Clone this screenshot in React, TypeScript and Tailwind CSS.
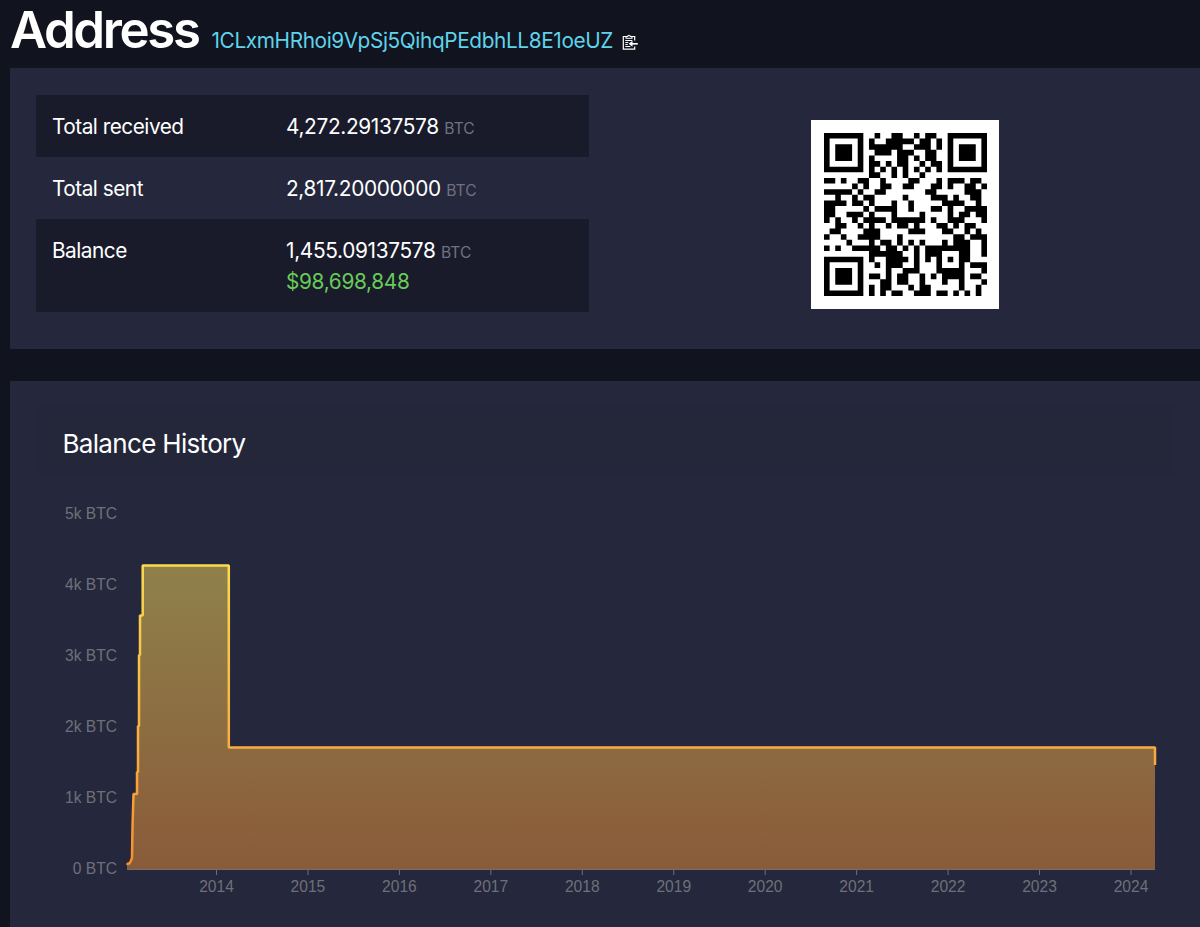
import { useMemo } from 'react'

const ADDRESS = '1CLxmHRhoi9VpSj5QihqPEdbhLL8E1oeUZ'

const QR_SIZE = 29
const DATA_CODEWORDS = 55
const EC_CODEWORDS = 15

// version 3, level L, mask 7
const FORMAT_BITS = 0b110100101110110

function gfMul(a: number, b: number) {
  let r = 0
  for (let i = 7; i >= 0; i--) {
    r = (r << 1) ^ ((r >> 7) * 0x11d)
    r ^= ((b >> i) & 1) * a
  }
  return r & 0xff
}

function errorCorrection(data: number[]) {
  const gen = new Array(EC_CODEWORDS).fill(0)
  gen[EC_CODEWORDS - 1] = 1
  let root = 1
  for (let i = 0; i < EC_CODEWORDS; i++) {
    for (let j = 0; j < EC_CODEWORDS; j++) {
      gen[j] = gfMul(gen[j], root)
      if (j + 1 < EC_CODEWORDS) gen[j] ^= gen[j + 1]
    }
    root = gfMul(root, 2)
  }
  const rem = new Array(EC_CODEWORDS).fill(0)
  for (const byte of data) {
    const factor = byte ^ rem.shift()
    rem.push(0)
    gen.forEach((g, i) => (rem[i] ^= gfMul(g, factor)))
  }
  return rem
}

function buildQr(text: string) {
  let bits = '0100' + text.length.toString(2).padStart(8, '0')
  for (const ch of text) bits += ch.charCodeAt(0).toString(2).padStart(8, '0')
  bits += '0000'
  const data: number[] = []
  for (let i = 0; i < bits.length; i += 8) data.push(parseInt(bits.slice(i, i + 8), 2))
  for (let pad = 0xec; data.length < DATA_CODEWORDS; pad ^= 0xec ^ 0x11) data.push(pad)
  const all = [...data, ...errorCorrection(data)]

  const grid: (boolean | null)[][] = Array.from({ length: QR_SIZE }, () => new Array(QR_SIZE).fill(null))
  const set = (row: number, col: number, dark: boolean) => {
    if (row >= 0 && row < QR_SIZE && col >= 0 && col < QR_SIZE) grid[row][col] = dark
  }

  for (let i = 0; i < QR_SIZE; i++) {
    set(6, i, i % 2 === 0)
    set(i, 6, i % 2 === 0)
  }
  for (const [r, c] of [[3, 3], [3, QR_SIZE - 4], [QR_SIZE - 4, 3]]) {
    for (let dy = -4; dy <= 4; dy++) {
      for (let dx = -4; dx <= 4; dx++) {
        const d = Math.max(Math.abs(dx), Math.abs(dy))
        set(r + dy, c + dx, d !== 2 && d !== 4)
      }
    }
  }
  for (let dy = -2; dy <= 2; dy++) {
    for (let dx = -2; dx <= 2; dx++) {
      set(22 + dy, 22 + dx, Math.max(Math.abs(dx), Math.abs(dy)) !== 1)
    }
  }

  const fmt = (i: number) => ((FORMAT_BITS >> i) & 1) === 1
  for (let i = 0; i <= 5; i++) set(i, 8, fmt(i))
  set(7, 8, fmt(6))
  set(8, 8, fmt(7))
  set(8, 7, fmt(8))
  for (let i = 9; i < 15; i++) set(8, 14 - i, fmt(i))
  for (let i = 0; i < 8; i++) set(8, QR_SIZE - 1 - i, fmt(i))
  for (let i = 8; i < 15; i++) set(QR_SIZE - 15 + i, 8, fmt(i))
  set(QR_SIZE - 8, 8, true)

  let n = 0
  for (let right = QR_SIZE - 1; right >= 1; right -= 2) {
    if (right === 6) right = 5
    for (let v = 0; v < QR_SIZE; v++) {
      for (let j = 0; j < 2; j++) {
        const x = right - j
        const y = ((right + 1) & 2) === 0 ? QR_SIZE - 1 - v : v
        if (grid[y][x] !== null) continue
        const bit = n < all.length * 8 ? (all[n >> 3] >> (7 - (n & 7))) & 1 : 0
        const flip = (((x + y) % 2) + ((x * y) % 3)) % 2 === 0
        grid[y][x] = (bit === 1) !== flip
        n++
      }
    }
  }
  return grid
}

function QrCode({ text }: { text: string }) {
  const path = useMemo(
    () =>
      buildQr(text)
        .map((row, y) => row.map((dark, x) => (dark ? `M${x} ${y}h1v1h-1z` : '')).join(''))
        .join(''),
    [text]
  )
  return (
    <div className="w-[188px] h-[189px] bg-white p-[13px]">
      <svg viewBox="0 0 29 29" className="w-[163px] h-[163px]">
        <path d={path} fill="#000" />
      </svg>
    </div>
  )
}

function ClipboardIcon() {
  return (
    <svg viewBox="0 0 16 16" className="w-4 h-4" fill="none" stroke="#fff">
      <path d="M4.5 2.5H1.3v12.7h11.4v-2.7M9.5 2.5h3.2v4" strokeWidth="1.2" />
      <path d="M4 4.300V2.500h1.700a1.300 1.300 0 0 1 2.600 0H10v1.800z" strokeWidth="1.1" />
      <path d="M3.300 6.500h7M3.300 8.500h3M3.300 10.500h2.500M3.300 12.500h5" strokeWidth="1" />
      <path d="M15.800 9.800H8" strokeWidth="1.7" />
      <path d="M10.500 6.800L6.600 9.800l3.900 3z" fill="#fff" stroke="none" />
    </svg>
  )
}

const rows = [
  { label: 'Total received', value: '4,272.29137578', fiat: null },
  { label: 'Total sent', value: '2,817.20000000', fiat: null },
  { label: 'Balance', value: '1,455.09137578', fiat: '$98,698,848' },
]

const yTicks = ['0 BTC', '1k BTC', '2k BTC', '3k BTC', '4k BTC', '5k BTC']
const years = [2014, 2015, 2016, 2017, 2018, 2019, 2020, 2021, 2022, 2023, 2024]

const balanceLine =
  'M117 388L118 386.5H119.5L121 383.5L122 381L122.5 350L123.5 317H127V295H128V249H129V178H130V138.5H132.7V88.5H218.8V270.5H1145V288'

function BalanceChart() {
  return (
    <svg
      viewBox="0 0 1190 450"
      className="block w-[1190px] h-[450px]"
      fontFamily="'Liberation Sans', Arial, sans-serif"
      fontSize="15.6"
      fill="#6e7079"
    >
      <defs>
        <linearGradient id="line" gradientUnits="userSpaceOnUse" x1="0" y1="88" x2="0" y2="392">
          <stop offset="0" stopColor="#fbdc4c" />
          <stop offset="0.6" stopColor="#f9ad3f" />
          <stop offset="1" stopColor="#fb8c2c" />
        </linearGradient>
        <linearGradient id="area" gradientUnits="userSpaceOnUse" x1="0" y1="88" x2="0" y2="392">
          <stop offset="0" stopColor="#8f814b" />
          <stop offset="1" stopColor="#8a5b39" />
        </linearGradient>
      </defs>
      {yTicks.map((label, i) => (
        <text key={label} x="107" y={397 - i * 70.95} textAnchor="end">
          {label}
        </text>
      ))}
      <path d={`${balanceLine}V392H117z`} fill="url(#area)" />
      <path d="M117 392.5H1145" stroke="#6e7079" />
      {years.map((year, i) => (
        <g key={year}>
          <path d={`M${206.5 + i * 91.45} 392v6`} stroke="#6e7079" />
          <text x={206.5 + i * 91.45} y="415" textAnchor="middle">
            {year}
          </text>
        </g>
      ))}
      <path d={balanceLine} fill="none" stroke="url(#line)" strokeWidth="2.5" strokeLinejoin="bevel" />
    </svg>
  )
}

export default function App() {
  return (
    <div className="w-[1200px] h-[927px] overflow-hidden bg-[#11131f] pl-[10px] font-[Inter,sans-serif] text-white">
      <header className="flex items-baseline h-[68px]">
        <h1 className="w-[201.5px] text-[51px] leading-[59px] font-semibold tracking-[-2.4px]">Address</h1>
        <a className="w-[402px] text-[20.8px] tracking-[-0.38px] whitespace-nowrap text-[#5fd3ea]">{ADDRESS}</a>
        <div className="ml-[8px] translate-y-[2px]">
          <ClipboardIcon />
        </div>
      </header>

      <section className="flex h-[281px] bg-[#25273c] pl-[26px] pt-[26.5px]">
        <div className="w-[553px]">
          {rows.map((row, i) => (
            <div
              key={row.label}
              className={`flex px-4 text-[20.8px] leading-[31px] pt-[16px] ${i % 2 === 0 ? 'bg-[#191b2b]' : ''} ${
                row.fiat ? 'h-[92.5px]' : 'h-[62.3px]'
              }`}
            >
              <div className="w-[234px] tracking-[-0.5px]">{row.label}</div>
              <div className="tracking-[-0.32px]">
                <div className="h-[31px]">
                  {row.value} <span className="text-[15.6px] leading-none text-[#6f7180] tracking-normal">BTC</span>
                </div>
                {row.fiat && <div className="text-[#68cb58]">{row.fiat}</div>}
              </div>
            </div>
          ))}
        </div>
        <div className="ml-[222px] mt-[25.5px]">
          <QrCode text={ADDRESS} />
        </div>
      </section>

      <section className="mt-8 h-[546px] bg-[#25273c] pt-[24px]">
        <div className="mx-[26px] h-[72px] bg-[#24263a] pl-[26.5px] pt-[20px]">
          <h2 className="text-[26px] leading-[38px] tracking-[-0.68px]">Balance History</h2>
        </div>
        <BalanceChart />
      </section>
    </div>
  )
}
